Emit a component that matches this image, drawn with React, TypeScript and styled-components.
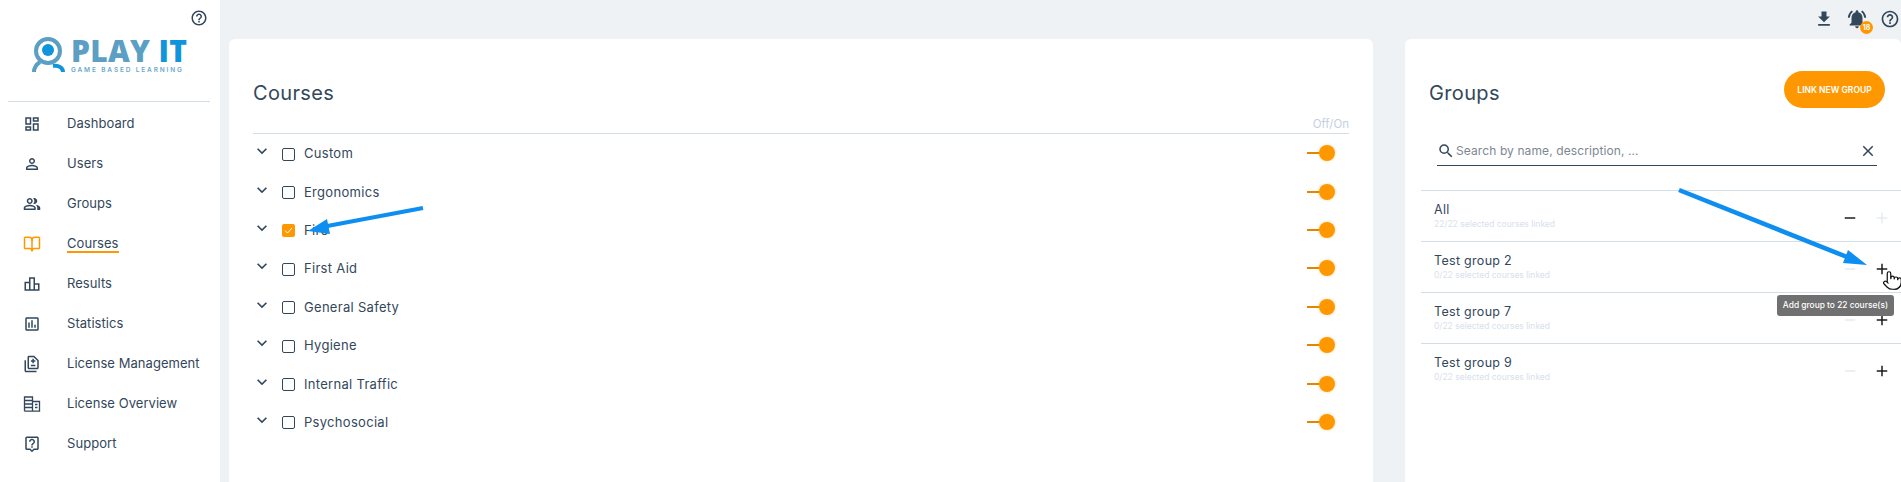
import React from "react";
import styled, { createGlobalStyle } from "styled-components";
import { BookOpen, Pointer } from "lucide-react";
import {
  MdAdd,
  MdClose,
  MdFileDownload,
  MdHelpOutline,
  MdKeyboardArrowDown,
  MdNotificationsActive,
  MdOutlineAssessment,
  MdOutlineDashboard,
  MdOutlineDifference,
  MdOutlineLeaderboard,
  MdOutlineLiveHelp,
  MdOutlinePeopleAlt,
  MdOutlinePersonOutline,
  MdRemove,
  MdSearch,
} from "react-icons/md";

const ink = "#33475b";
const orange = "#ff9800";
const font = `Inter, "Noto Sans", "Liberation Sans", sans-serif`;

const GlobalStyle = createGlobalStyle`
  html, body {
    margin: 0;
    padding: 0;
    height: 100%;
    overflow: hidden;
    background: #eff2f4;
    font-family: ${font};
    color: ${ink};
  }
`;

const Page = styled.div`
  position: relative;
  display: flex;
  width: 1901px;
  height: 482px;
  overflow: hidden;
`;

const Sidebar = styled.aside`
  width: 220px;
  flex-shrink: 0;
  background: #fff;
  padding: 9px 0 0 8px;
  box-sizing: border-box;
`;

const SideHelp = styled.div`
  display: flex;
  justify-content: flex-end;
  padding-right: 12px;
  height: 18px;
  font-size: 18px;
`;

const Logo = styled.div`
  display: flex;
  gap: 5px;
  height: 46px;
  margin: 10px 0 0 23px;
  padding-bottom: 18px;
`;

const LogoWords = styled.div`
  display: flex;
  flex-direction: column;
`;

const LogoTitle = styled.div`
  font-family: "Open Sans", ${font};
  font-size: 30px;
  font-weight: 800;
  line-height: 28px;
  letter-spacing: 0.3px;
  height: 29px;
  color: #5b9fc4;
  white-space: nowrap;
  span {
    color: #1095dc;
  }
`;

const LogoTag = styled.div`
  font-size: 6.5px;
  font-weight: 600;
  letter-spacing: 1.85px;
  line-height: 8px;
  color: #6ba9cb;
  white-space: nowrap;
`;

const SideRule = styled.div`
  width: 202px;
  height: 1px;
  background: #d4dde6;
`;

const Nav = styled.nav`
  display: flex;
  flex-direction: column;
  padding: 2px 0 0 15px;
`;

const NavItem = styled.div<{ $active?: boolean }>`
  display: flex;
  align-items: center;
  height: 40px;
  font-size: 13px;
  letter-spacing: 0.05px;
  color: ${ink};
  svg {
    width: 18px;
    height: 18px;
    margin-right: 26px;
    flex-shrink: 0;
    color: ${(p) => (p.$active ? orange : ink)};
  }
  span {
    border-bottom: 2px solid ${(p) => (p.$active ? orange : "transparent")};
    line-height: 16px;
  }
`;

const Main = styled.main`
  flex: 1;
  display: flex;
  flex-direction: column;
  padding-left: 9px;
  min-width: 0;
`;

const TopBar = styled.header`
  height: 39px;
  box-sizing: border-box;
  flex-shrink: 0;
  display: flex;
  justify-content: flex-end;
  align-items: center;
  padding: 0 1px 2px 0;
  gap: 8px;
  svg {
    width: 20px;
    height: 20px;
    display: block;
  }
`;

const BellWrap = styled.div`
  position: relative;
  margin: 0 4px;
  svg {
    width: 22px;
    height: 22px;
  }
`;

const Badge = styled.div`
  position: absolute;
  right: -5px;
  bottom: -4px;
  width: 13px;
  height: 13px;
  border-radius: 50%;
  background: ${orange};
  color: #fff;
  font-size: 7px;
  font-weight: 700;
  line-height: 13px;
  text-align: center;
`;

const Cards = styled.div`
  flex: 1;
  display: flex;
  gap: 32px;
`;

const Card = styled.section<{ $width: number }>`
  width: ${(p) => p.$width}px;
  flex-shrink: 0;
  background: #fff;
  border-radius: 6px 6px 0 0;
  box-sizing: border-box;
`;

const CoursesBody = styled.div`
  padding: 40px 24px 0;
`;

const Title = styled.h2`
  margin: 0;
  font-size: 20px;
  font-weight: 400;
  letter-spacing: 0.35px;
  line-height: 28px;
  color: ${ink};
`;

const ColumnHead = styled.div`
  display: flex;
  justify-content: flex-end;
  height: 14px;
  margin-top: 10px;
  border-bottom: 1px solid #d4dde6;
  padding-bottom: 2px;
  font-size: 11.5px;
  line-height: 14px;
  color: #c5cfdf;
`;

const CourseList = styled.div`
  display: flex;
  flex-direction: column;
`;

const CourseRow = styled.div`
  display: flex;
  align-items: center;
  height: 38.4px;
  font-size: 13px;
  letter-spacing: 0.3px;
`;

const Chevron = styled(MdKeyboardArrowDown)`
  width: 20px;
  height: 20px;
  margin: -4px 10px 0 -1px;
  color: ${ink};
`;

const Check = styled.div<{ $on?: boolean }>`
  width: 13px;
  height: 13px;
  box-sizing: border-box;
  margin: 2px 9px 0 0;
  border-radius: 2px;
  border: ${(p) => (p.$on ? "none" : `1.3px solid ${ink}`)};
  background: ${(p) => (p.$on ? orange : "#fff")};
  display: flex;
  align-items: center;
  justify-content: center;
`;

const CourseName = styled.span`
  flex: 1;
`;

const Toggle = styled.div`
  position: relative;
  width: 28px;
  height: 16px;
  margin-right: 14px;
  &::before {
    content: "";
    position: absolute;
    left: 0;
    right: 10px;
    top: 7px;
    height: 2px;
    background: #e08600;
  }
  &::after {
    content: "";
    position: absolute;
    right: 0;
    top: 0;
    width: 16px;
    height: 16px;
    border-radius: 50%;
    background: ${orange};
    box-shadow: 0 0 3px rgba(255, 152, 0, 0.35);
  }
`;

const GroupHead = styled.div`
  display: flex;
  justify-content: space-between;
  align-items: flex-start;
  padding: 32px 16px 0 24px;
  h2 {
    margin-top: 8px;
  }
`;

const LinkButton = styled.button`
  width: 101px;
  height: 37px;
  border: none;
  border-radius: 19px;
  background: ${orange};
  color: #fff;
  font-family: ${font};
  font-size: 8.5px;
  font-weight: 600;
  padding: 0;
`;

const SearchBar = styled.div`
  display: flex;
  align-items: center;
  height: 29px;
  margin: 28px 24px 0 32px;
  border-bottom: 1px solid ${ink};
  font-size: 12px;
  letter-spacing: 0.1px;
  color: #7d8793;
  svg {
    flex-shrink: 0;
    color: ${ink};
  }
  span {
    flex: 1;
    margin-left: 1px;
  }
`;

const GroupList = styled.div`
  margin: 24px 0 0 16px;
`;

const GroupRow = styled.div`
  display: flex;
  align-items: center;
  height: 51px;
  box-sizing: border-box;
  border-top: 1px solid #d4dde6;
  padding: 0 10px 0 13px;
  position: relative;
`;

const GroupText = styled.div`
  flex: 1;
  margin-top: -1px;
`;

const GroupName = styled.div`
  font-size: 12.5px;
  letter-spacing: 0.3px;
  line-height: 18px;
  color: ${ink};
`;

const GroupSub = styled.div`
  font-size: 8.5px;
  letter-spacing: 0;
  line-height: 11px;
  color: #d9e1ec;
`;

const GroupAction = styled.div<{ $off?: boolean }>`
  width: 18px;
  height: 18px;
  margin-left: 14px;
  margin-top: 3px;
  color: ${(p) => (p.$off ? "#e6ebf1" : "#1c1c1c")};
  svg {
    display: block;
    width: 18px;
    height: 18px;
  }
`;

const Tooltip = styled.div`
  position: absolute;
  right: 7px;
  top: 53px;
  height: 21px;
  padding: 0 6px;
  border-radius: 3px;
  background: #707070;
  color: #fff;
  font-size: 8.4px;
  font-weight: 500;
  line-height: 21px;
  white-space: nowrap;
  z-index: 2;
`;

const Overlay = styled.svg`
  position: absolute;
  left: 0;
  top: 0;
  width: 1901px;
  height: 482px;
  pointer-events: none;
  z-index: 3;
`;

const Hand = styled(Pointer)`
  position: absolute;
  left: 1882px;
  top: 268px;
  width: 21px;
  height: 25px;
  color: #111;
  fill: #fff;
  stroke-width: 1.4;
  z-index: 4;
`;

const OverviewIcon = () => (
  <svg viewBox="0 0 18 18" fill="none" stroke="currentColor" strokeWidth="1.3">
    <path d="M1.5 16.2V2h8v14.2M9.5 6.5h7v9.7h-15" />
    <path d="M1.5 5.5h8M1.5 9h8M1.5 12.5h8M12 9.5h2.5M12 12.5h2.5" />
  </svg>
);

const navItems = [
  { label: "Dashboard", icon: <MdOutlineDashboard /> },
  { label: "Users", icon: <MdOutlinePersonOutline /> },
  { label: "Groups", icon: <MdOutlinePeopleAlt /> },
  { label: "Courses", icon: <BookOpen />, active: true },
  { label: "Results", icon: <MdOutlineLeaderboard /> },
  { label: "Statistics", icon: <MdOutlineAssessment /> },
  { label: "License Management", icon: <MdOutlineDifference /> },
  { label: "License Overview", icon: <OverviewIcon /> },
  { label: "Support", icon: <MdOutlineLiveHelp /> },
];

const courses = ["Custom", "Ergonomics", "Fire", "First Aid", "General Safety", "Hygiene", "Internal Traffic", "Psychosocial"];

const groups = [
  { name: "All", sub: "22/22 selected courses linked", linked: true },
  { name: "Test group 2", sub: "0/22 selected courses linked", tip: true },
  { name: "Test group 7", sub: "0/22 selected courses linked" },
  { name: "Test group 9", sub: "0/22 selected courses linked" },
];

const App: React.FC = () => {
  return (
    <Page>
      <GlobalStyle />
      <Sidebar>
        <SideHelp>
          <MdHelpOutline />
        </SideHelp>
        <Logo>
          <svg width="35" height="38" viewBox="0 0 35 38">
            <circle cx="17" cy="14" r="12" fill="none" stroke="#5b9fc4" strokeWidth="4" />
            <circle cx="17" cy="13" r="6" fill="#1095dc" />
            <path d="M3 35 C3 30 6 27 9 25" fill="none" stroke="#5b9fc4" strokeWidth="4" />
            <path d="M22 29 C28 28 32 31 32 35" fill="none" stroke="#1095dc" strokeWidth="4" />
          </svg>
          <LogoWords>
            <LogoTitle>
              PLAY <span>IT</span>
            </LogoTitle>
            <LogoTag>GAME BASED LEARNING</LogoTag>
          </LogoWords>
        </Logo>
        <SideRule />
        <Nav>
          {navItems.map((item) => (
            <NavItem key={item.label} $active={item.active}>
              {item.icon}
              <span>{item.label}</span>
            </NavItem>
          ))}
        </Nav>
      </Sidebar>
      <Main>
        <TopBar>
          <MdFileDownload />
          <BellWrap>
            <MdNotificationsActive />
            <Badge>18</Badge>
          </BellWrap>
          <MdHelpOutline />
        </TopBar>
        <Cards>
          <Card $width={1144}>
            <CoursesBody>
              <Title>Courses</Title>
              <ColumnHead>Off/On</ColumnHead>
              <CourseList>
                {courses.map((name) => (
                  <CourseRow key={name}>
                    <Chevron />
                    <Check $on={name === "Fire"}>
                      {name === "Fire" && (
                        <svg width="9" height="9" viewBox="0 0 9 9">
                          <path d="M1 4.5 L3.5 7 L8 2" fill="none" stroke="#fff" strokeWidth="1" />
                        </svg>
                      )}
                    </Check>
                    <CourseName>{name}</CourseName>
                    <Toggle />
                  </CourseRow>
                ))}
              </CourseList>
            </CoursesBody>
          </Card>
          <Card $width={496}>
            <GroupHead>
              <Title>Groups</Title>
              <LinkButton>LINK NEW GROUP</LinkButton>
            </GroupHead>
            <SearchBar>
              <MdSearch size={18} />
              <span>Search by name, description, ...</span>
              <MdClose size={18} />
            </SearchBar>
            <GroupList>
              {groups.map((group) => (
                <GroupRow key={group.name}>
                  <GroupText>
                    <GroupName>{group.name}</GroupName>
                    <GroupSub>{group.sub}</GroupSub>
                  </GroupText>
                  <GroupAction $off={!group.linked}>
                    <MdRemove />
                  </GroupAction>
                  <GroupAction $off={group.linked}>
                    <MdAdd />
                  </GroupAction>
                  {group.tip && <Tooltip>Add group to 22 course(s)</Tooltip>}
                </GroupRow>
              ))}
            </GroupList>
          </Card>
        </Cards>
      </Main>
      <Overlay viewBox="0 0 1901 482">
        <line x1="423" y1="208" x2="322" y2="227" stroke="#0d8ef0" strokeWidth="4" />
        <polygon points="308,231 327,219 330,234" fill="#0d8ef0" />
        <line x1="1679" y1="190" x2="1852" y2="259" stroke="#0d8ef0" strokeWidth="4.5" />
        <polygon points="1867,265 1848,250 1843,263" fill="#0d8ef0" />
      </Overlay>
      <Hand />
    </Page>
  );
};

export default App;
